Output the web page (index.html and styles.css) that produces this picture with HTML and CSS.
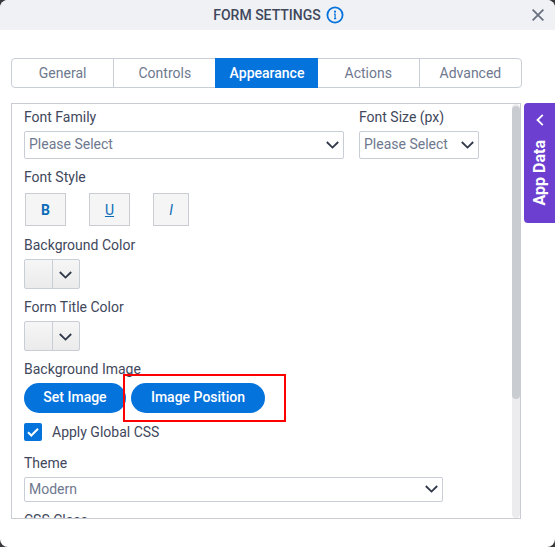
FILE: index.html
```
<!DOCTYPE html>
<html lang="en">
<head>
<meta charset="utf-8">
<title>Form Settings</title>
<link rel="stylesheet" href="styles.css">
</head>
<body>
<main class="dialog">
  <header class="header">
    <h1 class="title">FORM SETTINGS</h1>
    <svg class="info" viewBox="0 0 18 18" aria-hidden="true"><circle cx="9" cy="9" r="7.6" fill="none" stroke="#0573dc" stroke-width="1.8"/><circle cx="9" cy="5.7" r="1.1" fill="#0573dc"/><path d="M8 8.2h1.1v4.6M8 12.6h2.2" fill="none" stroke="#0573dc" stroke-width="1.2"/></svg>
    <button class="close" type="button" aria-label="Close"><svg viewBox="0 0 12 12" width="12" height="12"><path d="M.6.6l10.8 10.8M11.4.6L.6 11.4" stroke="#697080" stroke-width="1.8" fill="none"/></svg></button>
  </header>
  <div class="content">
    <nav class="tabs">
      <button class="tab" type="button">General</button>
      <button class="tab" type="button">Controls</button>
      <button class="tab active" type="button">Appearance</button>
      <button class="tab" type="button">Actions</button>
      <button class="tab" type="button">Advanced</button>
    </nav>
    <section class="panel">
      <form class="form">
        <div class="row">
          <div class="field family">
            <label for="family">Font Family</label>
            <div class="pick"><select id="family"><option>Please Select</option></select><svg class="chev" viewBox="0 0 13 8"><path d="M.8 1l5.7 5.6L12.2 1"/></svg></div>
          </div>
          <div class="field size">
            <label for="size">Font Size (px)</label>
            <div class="pick"><select id="size"><option>Please Select</option></select><svg class="chev" viewBox="0 0 13 8"><path d="M.8 1l5.7 5.6L12.2 1"/></svg></div>
          </div>
        </div>
        <div class="field">
          <span class="label">Font Style</span>
          <div class="styles">
            <button class="style bold" type="button">B</button>
            <button class="style underline" type="button">U</button>
            <button class="style italic" type="button">I</button>
          </div>
        </div>
        <div class="field">
          <span class="label">Background Color</span>
          <button class="color" type="button" aria-label="Background Color"><span class="swatch"></span><span class="drop"><svg class="arrow" viewBox="0 0 13 8"><path d="M.8 1l5.7 5.6L12.2 1"/></svg></span></button>
        </div>
        <div class="field">
          <span class="label">Form Title Color</span>
          <button class="color" type="button" aria-label="Form Title Color"><span class="swatch"></span><span class="drop"><svg class="arrow" viewBox="0 0 13 8"><path d="M.8 1l5.7 5.6L12.2 1"/></svg></span></button>
        </div>
        <div class="field">
          <span class="label">Background Image</span>
          <div class="images">
            <button class="pill" type="button">Set Image</button>
            <div class="marked"><button class="pill wide" type="button">Image Position</button></div>
          </div>
        </div>
        <label class="check"><input type="checkbox" checked><svg class="tick" viewBox="0 0 18 18" aria-hidden="true"><path d="M4 9.3l3.3 3.2L14 5.8" fill="none" stroke="#fff" stroke-width="2"/></svg>Apply Global CSS</label>
        <div class="field theme">
          <label for="theme">Theme</label>
          <div class="pick"><select id="theme"><option>Modern</option></select><svg class="chev" viewBox="0 0 13 8"><path d="M.8 1l5.7 5.6L12.2 1"/></svg></div>
        </div>
        <div class="field">
          <label for="css">CSS Class</label>
          <input id="css" type="text">
        </div>
      </form>
      <div class="track"><div class="thumb"></div></div>
    </section>
  </div>
  <button class="drawer" type="button"><svg viewBox="0 0 8 12" width="8" height="12"><path d="M6.8.8L1.5 6l5.3 5.2" fill="none" stroke="#fff" stroke-width="1.8"/></svg><span class="drawer-text">App Data</span></button>
</main>
</body>
</html>
```
FILE: styles.css
```
* { box-sizing: border-box; }
body {
  margin: 0;
  background: #3a3a3e;
  color: #3f485c;
  font: 14px/20px Roboto, "Liberation Sans", sans-serif;
}
button, select, input { font: inherit; color: inherit; margin: 0; }
button { padding: 0; }
svg { display: block; }

.dialog {
  position: relative;
  display: flex;
  flex-direction: column;
  height: 100vh;
  background: #fff;
  border-radius: 8px;
  overflow: hidden;
}
.header {
  position: relative;
  display: flex;
  flex: none;
  align-items: center;
  justify-content: center;
  gap: 5px;
  height: 30px;
  padding-left: 2px;
  background: #f0f1f4;
}
.title { margin: 0; font-size: 14px; font-weight: 500; }
.info { width: 18px; height: 18px; }
.close {
  position: absolute;
  right: 11px;
  top: 9px;
  border: 0;
  background: none;
}

.content {
  display: flex;
  flex: 1;
  flex-direction: column;
  gap: 15px;
  min-height: 0;
  padding: 28px 33px 28px 11px;
}
.tabs {
  display: flex;
  flex: none;
  height: 30px;
  border: 1px solid #c9cdd6;
  border-radius: 4px;
}
.tab {
  flex: 1;
  border: 0;
  border-left: 1px solid #c9cdd6;
  background: none;
  color: #6e788e;
}
.tab:first-child { border-left: 0; }
.tab.active {
  margin: -1px 0;
  border-color: #0573dc;
  background: #0573dc;
  color: #fff;
  font-weight: 500;
}
.tab.active + .tab { border-left: 0; }

.panel {
  display: flex;
  flex: 1;
  min-height: 0;
  margin-right: 1px;
  border: 1px solid #c9cdd3;
}
.form {
  display: flex;
  flex: 1;
  flex-direction: column;
  gap: 8px;
  padding: 3px 0 0 12px;
  overflow: hidden;
}
.field {
  display: flex;
  flex: none;
  flex-direction: column;
  align-items: flex-start;
  gap: 4px;
}
.row { display: flex; flex: none; gap: 15px; padding-right: 33px; }
.family { flex: 1; }
.size { flex: none; width: 120px; }
.pick { position: relative; width: 100%; }
.pick select {
  display: block;
  width: 100%;
  height: 28px;
  padding: 0 28px 2px 4px;
  border: 1px solid #c9cdd6;
  border-radius: 2px;
  background: #fff;
  color: #6e788e;
  appearance: none;
}
.chev { position: absolute; right: 5px; top: 10px; }
.chev, .arrow {
  width: 13px;
  height: 8px;
  fill: none;
  stroke: #2f3848;
  stroke-width: 1.8;
  pointer-events: none;
}
.styles { display: flex; gap: 23px; padding: 2px 0 1px 1px; }
.style {
  width: 41px;
  height: 33px;
  border: 1px solid #c9cdd3;
  background: #f5f5f5;
  color: #0b6cb8;
}
.bold { font-weight: 700; }
.underline { text-decoration: underline; }
.italic { width: 36px; font-style: italic; }
.color {
  display: flex;
  width: 56px;
  height: 30px;
  border: 1px solid #c9cdd6;
  border-radius: 2px;
  background: linear-gradient(#f6f6f6, #ebebeb);
}
.swatch { flex: 1; height: 100%; border-right: 1px solid #c9cdd6; }
.drop {
  display: flex;
  flex: 1;
  height: 100%;
  align-items: center;
  justify-content: center;
  padding-top: 2px;
}
.images { display: flex; gap: 5px; }
.pill {
  width: 102px;
  height: 30px;
  padding-bottom: 2px;
  border: 0;
  border-radius: 15px;
  background: #0573dc;
  color: #fff;
  font-weight: 500;
}
.wide { width: 134px; }
.marked { position: relative; }
.marked::after {
  content: "";
  position: absolute;
  inset: -9px -21px -9px -8px;
  border: 2px solid #f00;
  pointer-events: none;
}
.check {
  position: relative;
  display: flex;
  flex: none;
  align-items: center;
  gap: 10px;
  height: 18px;
  margin: 2px 0 4px;
}
.check input {
  width: 18px;
  height: 18px;
  border-radius: 2px;
  background: #0573dc;
  appearance: none;
}
.tick { position: absolute; left: 0; top: 0; width: 18px; height: 18px; }
.theme { padding-right: 69px; }
.theme select { height: 25px; }
.theme .chev { top: 8px; }
#css { width: 100%; height: 28px; border: 1px solid #c9cdd6; }
.track {
  flex: none;
  width: 8px;
  padding-top: 2px;
  border-radius: 4px;
  background: #ececee;
}
.thumb { height: 71%; border-radius: 4px; background: #c9cdd2; }

.drawer {
  position: absolute;
  right: 0;
  top: 103px;
  display: flex;
  flex-direction: column;
  align-items: center;
  gap: 14px;
  width: 31px;
  height: 120px;
  padding-top: 11px;
  border: 0;
  border-radius: 4px 0 0 4px;
  background: #6d3fd0;
  color: #fff;
}
.drawer-text {
  font-size: 16px;
  font-weight: 700;
  writing-mode: vertical-rl;
  transform: rotate(180deg);
}
```
